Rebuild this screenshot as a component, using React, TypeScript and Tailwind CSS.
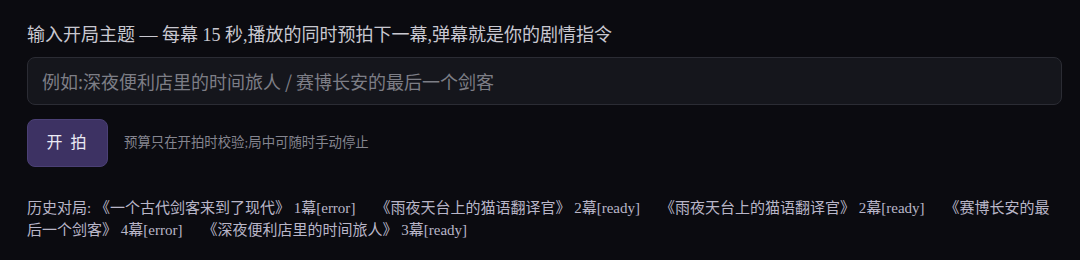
export default function App() {
  const history = [
    { title: '一个古代剑客来到了现代', count: 1, status: 'error' },
    { title: '雨夜天台上的猫语翻译官', count: 2, status: 'ready' },
    { title: '雨夜天台上的猫语翻译官', count: 2, status: 'ready' },
    { title: '赛博长安的最后一个剑客', count: 4, status: 'error' },
    { title: '深夜便利店里的时间旅人', count: 3, status: 'ready' },
  ];

  return (
    <div className="h-[260px] w-[1080px] bg-[#0b0b10] pl-[27px] pr-[18px] pt-[23px] font-['Liberation_Serif','Noto_Sans_CJK_SC',serif]">
      <div className="text-[18px] leading-[24px] text-[#c9c8d0]">
        输入开局主题 — 每幕 15 秒,播放的同时预拍下一幕,弹幕就是你的剧情指令
      </div>

      <input
        className="mt-[10px] block h-[48px] w-full rounded-lg border border-[#2b2c34] bg-[#15161c] px-[14px] font-['Noto_Sans_CJK_SC',sans-serif] text-[18px] text-[#d0d0d8] outline-none placeholder:text-[#7d7e86]"
        placeholder="例如:深夜便利店里的时间旅人 / 赛博长安的最后一个剑客"
      />

      <div className="mt-[14px] flex items-center gap-[16px]">
        <button className="h-[48px] w-[81px] rounded-lg border border-[#4b4075] bg-[#3d3263] text-[16px] tracking-[2px] text-[#ecebf5]">
          开 拍
        </button>
        <span className="text-[13.4px] text-[#85858f]">预算只在开拍时校验;局中可随时手动停止</span>
      </div>

      <div className="mt-[30px] text-[15px] leading-[22px] text-[#b9b6c8]">
        历史对局:{' '}
        {history.map((h, i) => (
          <span key={i} className={i === 0 ? 'pl-0' : 'pl-[20px]'}>
            《{h.title}》 {h.count}幕[{h.status}]
          </span>
        ))}
      </div>
    </div>
  );
}
